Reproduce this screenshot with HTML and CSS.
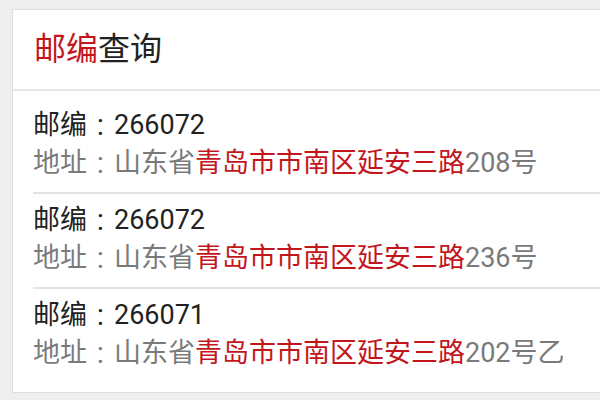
FILE: index.html
```html
<!DOCTYPE html>
<html lang="zh-CN">
<head>
<meta charset="utf-8">
<link rel="stylesheet" href="styles.css">
</head>
<body>
<div class="card">
  <div class="header"><span class="red">邮编</span>查询</div>
  <ul class="list">
    <li class="item">
      <div class="code">邮编<span class="colon">:</span>266072</div>
      <div class="addr">地址<span class="colon">:</span>山东省<span class="red">青岛市市南区延安三路</span>208号</div>
    </li>
    <li class="item">
      <div class="code">邮编<span class="colon">:</span>266072</div>
      <div class="addr">地址<span class="colon">:</span>山东省<span class="red">青岛市市南区延安三路</span>236号</div>
    </li>
    <li class="item">
      <div class="code">邮编<span class="colon">:</span>266071</div>
      <div class="addr">地址<span class="colon">:</span>山东省<span class="red">青岛市市南区延安三路</span>202号乙</div>
    </li>
  </ul>
</div>
</body>
</html>
```

FILE: styles.css
```css
html, body {
  margin: 0;
  padding: 0;
  background: #eeeeee;
  overflow: hidden;
  width: 600px;
  height: 400px;
}
body {
  padding: 9px 0 0 12px;
  box-sizing: border-box;
  font-family: Roboto, "Noto Sans CJK SC", sans-serif;
}
.card {
  width: 588px;
  background: #ffffff;
  border: 1px solid #dedede;
  border-right: none;
  box-sizing: border-box;
}
.header {
  height: 79px;
  line-height: 79px;
  padding-left: 21px;
  font-size: 32px;
  color: #222222;
  border-bottom: 2px solid #e6e6e6;
}
.red {
  color: #c3161c;
}
.list {
  list-style: none;
  margin: 0;
  padding: 8px 0 8px 20px;
}
.item {
  height: 95px;
  box-sizing: border-box;
  padding-top: 7px;
  font-size: 27px;
  line-height: 38px;
  border-bottom: 2px solid #e3e3e3;
}
.item:last-child {
  border-bottom: none;
}
.colon {
  display: inline-block;
  width: 27px;
  text-align: center;
  font-size: 30px;
  line-height: 38px;
  vertical-align: top;
  font-family: Roboto, sans-serif;
}
.code {
  color: #222222;
}
.addr {
  color: #7a7a7a;
}
```
